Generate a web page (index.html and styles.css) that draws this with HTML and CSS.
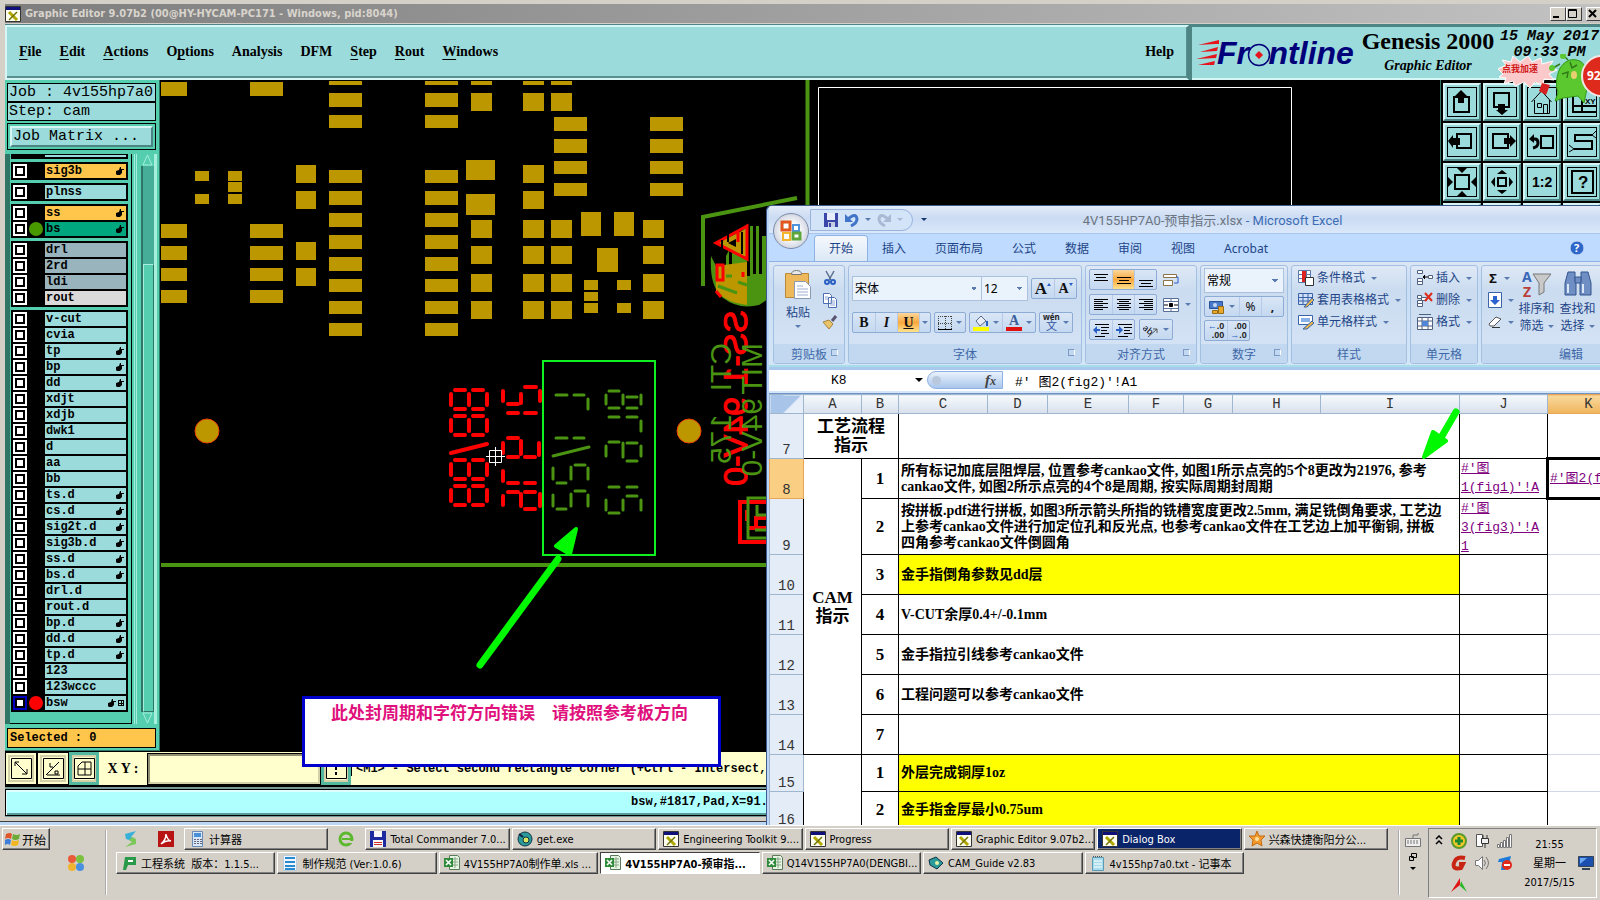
FILE: index.html
```html
<!DOCTYPE html>
<html lang="zh-CN">
<head>
    <meta charset="UTF-8">
    <meta name="viewport" content="width=device-width, initial-scale=1.0">
    <title>Graphic Editor 9.07b2</title>
    <link rel="stylesheet" href="styles.css">
</head>
<body>
    <!-- shared icons -->
    <svg class="sprite" width="0" height="0">
        <symbol id="hand" viewBox="0 0 8 8"><path d="M0 4l3-1 1-3 1 0v2h3v1H6v3L4 8H1L0 7z"/></symbol>
        <symbol id="xwin" viewBox="0 0 16 16"><path fill="#fffff0" stroke="#333" d="M.5.5h15v15H.5z"/><path fill="#10107a" d="M1 1h14v3H1z"/><path stroke="#b0a800" stroke-width="3" d="M4 6l8 8"/><path stroke="#6c7000" stroke-width="1.5" d="M12 6l-8 8"/></symbol>
        <symbol id="xls" viewBox="0 0 16 16"><path fill="#e8f4e4" stroke="#5a7a5a" d="M5.500.5h8l2 2v12h-10z"/><path stroke="#86a886" d="M7 4h7M7 7h7M7 10h7M11 2v11"/><path fill="#2e8b3a" d="M0 3h9v9H0z"/><path stroke="#fff" stroke-width="1.600" d="M2 5l5 5M7 5l-5 5"/></symbol>
    </svg>

    <div class="desktop">
        <!-- Genesis window -->
        <div class="genesis">
            <div class="g-title">
                <svg width="16" height="16"><use href="#xwin"/></svg>
                <span class="g-caption">Graphic Editor 9.07b2 (00@HY-HYCAM-PC171 - Windows, pid:8044)</span>
                <button class="win-btn" aria-label="Minimize"><svg width="12" height="11"><path d="M2 8h6v2H2z"/></svg></button>
                <button class="win-btn" aria-label="Maximize"><svg width="12" height="11"><path fill="none" stroke="#000" d="M1.500 1.500h8v8h-8zM1.500 2.500h8"/></svg></button>
                <button class="win-btn close" aria-label="Close"><svg width="12" height="11"><path stroke="#000" stroke-width="2" d="M2 2l7 7M9 2L2 9"/></svg></button>
            </div>

            <div class="g-top">
                <nav class="g-menu">
                    <button><u>F</u>ile</button>
                    <button><u>E</u>dit</button>
                    <button><u>A</u>ctions</button>
                    <button>O<u>p</u>tions</button>
                    <button>Analysis</button>
                    <button>DFM</button>
                    <button><u>S</u>tep</button>
                    <button><u>R</u>out</button>
                    <button><u>W</u>indows</button>
                    <button class="help">Help</button>
                </nav>
                <div class="g-brand">
                    <svg class="frontline" width="162" height="36">
                        <path fill="#e8141c" d="M2 7l21-5v4h-4zM4 14l18-5-1 4zM0 21l21-5-1 4zM2 27l17-4-1 4z"/>
                        <text x="21" y="26">Frontline</text>
                        <circle cx="63" cy="17" r="10.500" fill="#9bdbdb" stroke="#00007a" stroke-width="1.500"/>
                        <path fill="#e8141c" d="M63 13l4 4-4 4-4-4z"/>
                    </svg>
                    <div class="g-product">
                        <strong>Genesis 2000</strong>
                        <em>Graphic Editor</em>
                    </div>
                    <div class="g-date">15 May 2017<br>09:33 PM</div>
                </div>
            </div>

            <div class="g-main">
                <aside class="g-side">
                    <div class="job">
                        <div>Job : 4v155hp7a0</div>
                        <div>Step: cam</div>
                    </div>
                    <div class="matrix"><button>Job Matrix ...</button></div>
                    <div class="layers">
                        <div class="layer-list">
                            <div class="group cut"><span></span></div>
                            <div class="group">
                                <label class="layer orange"><input type="checkbox"><i></i><span>sig3b<svg><use href="#hand"/></svg></span></label>
                            </div>
                            <div class="group">
                                <label class="layer"><input type="checkbox"><i></i><span>plnss</span></label>
                            </div>
                            <div class="group">
                                <label class="layer orange"><input type="checkbox"><i></i><span>ss<svg><use href="#hand"/></svg></span></label>
                                <label class="layer green"><input type="checkbox"><i class="dot"></i><span>bs<svg><use href="#hand"/></svg></span></label>
                            </div>
                            <div class="group">
                                <label class="layer gray"><input type="checkbox"><i></i><span>drl</span></label>
                                <label class="layer gray"><input type="checkbox"><i></i><span>2rd</span></label>
                                <label class="layer gray"><input type="checkbox"><i></i><span>ldi</span></label>
                                <label class="layer light"><input type="checkbox"><i></i><span>rout</span></label>
                            </div>
                            <div class="group">
                                <label class="layer"><input type="checkbox"><i></i><span>v-cut</span></label>
                                <label class="layer"><input type="checkbox"><i></i><span>cvia</span></label>
                                <label class="layer"><input type="checkbox"><i></i><span>tp<svg><use href="#hand"/></svg></span></label>
                                <label class="layer"><input type="checkbox"><i></i><span>bp<svg><use href="#hand"/></svg></span></label>
                                <label class="layer"><input type="checkbox"><i></i><span>dd<svg><use href="#hand"/></svg></span></label>
                                <label class="layer"><input type="checkbox"><i></i><span>xdjt</span></label>
                                <label class="layer"><input type="checkbox"><i></i><span>xdjb</span></label>
                                <label class="layer"><input type="checkbox"><i></i><span>dwk1</span></label>
                                <label class="layer"><input type="checkbox"><i></i><span>d</span></label>
                                <label class="layer"><input type="checkbox"><i></i><span>aa</span></label>
                                <label class="layer"><input type="checkbox"><i></i><span>bb</span></label>
                                <label class="layer"><input type="checkbox"><i></i><span>ts.d<svg><use href="#hand"/></svg></span></label>
                                <label class="layer"><input type="checkbox"><i></i><span>cs.d<svg><use href="#hand"/></svg></span></label>
                                <label class="layer"><input type="checkbox"><i></i><span>sig2t.d<svg><use href="#hand"/></svg></span></label>
                                <label class="layer"><input type="checkbox"><i></i><span>sig3b.d<svg><use href="#hand"/></svg></span></label>
                                <label class="layer"><input type="checkbox"><i></i><span>ss.d<svg><use href="#hand"/></svg></span></label>
                                <label class="layer"><input type="checkbox"><i></i><span>bs.d<svg><use href="#hand"/></svg></span></label>
                                <label class="layer"><input type="checkbox"><i></i><span>drl.d</span></label>
                                <label class="layer"><input type="checkbox"><i></i><span>rout.d</span></label>
                                <label class="layer"><input type="checkbox"><i></i><span>bp.d<svg><use href="#hand"/></svg></span></label>
                                <label class="layer"><input type="checkbox"><i></i><span>dd.d<svg><use href="#hand"/></svg></span></label>
                                <label class="layer"><input type="checkbox"><i></i><span>tp.d<svg><use href="#hand"/></svg></span></label>
                                <label class="layer"><input type="checkbox"><i></i><span>123</span></label>
                                <label class="layer"><input type="checkbox"><i></i><span>123wccc</span></label>
                                <label class="layer work"><input type="checkbox" checked><i class="dot red"></i><span>bsw<svg><use href="#hand"/></svg><b></b></span></label>
                            </div>
                        </div>
                        <div class="scroll">
                            <svg width="11" height="12"><path fill="#54ceaf" stroke="#a5efdc" d="M5.500 1L1 11h9z"/></svg>
                            <div class="track"><div class="thumb"></div></div>
                            <svg width="11" height="12"><path fill="#54ceaf" stroke="#a5efdc" d="M5.500 11L1 1h9z"/></svg>
                        </div>
                    </div>
                    <div class="selected">Selected : 0</div>
                </aside>

                <svg class="board">
                    <defs>
                        <path id="wide" d="M0 81h33v4h-33zM0 93h33v14h-33zM0 115h33v13h-33zM0 170h33v13h-33zM0 191h33v14h-33zM0 213h33v14h-33zM0 235h33v14h-33zM0 257h33v14h-33zM0 279h33v13h-33zM0 301h33v13h-33zM0 323h33v13h-33z"/>
                        <path id="four" d="M0 220h21v18h-21zM0 246h21v18h-21zM0 274h21v18h-21zM0 301h21v18h-21z"/>
                        <path id="two" d="M0 81h21v4h-21zM0 93h21v18h-21z"/>
                        <path id="conn" d="M0 117h33v14h-33zM0 139h33v14h-33zM0 161h33v13h-33zM0 183h33v13h-33z"/>
                        <path id="eight" d="M1 6v11M19 6v11M37 6v11M5 2h10M23 2h10M5 21h10M23 21h10"/>
                    </defs>
                    <g transform="translate(-160 -80)">
                        <g fill="#bd9700">
                            <path d="M161 82h26v14h-26zM161 224h26v14h-26zM161 246h26v14h-26zM161 268h26v13h-26zM161 290h26v13h-26z"/>
                            <path d="M250 82h33v14h-33zM250 224h33v14h-33zM250 246h33v14h-33zM250 268h33v13h-33zM250 290h33v13h-33z"/>
                            <path d="M195 171h14v10h-14zM195 194h14v10h-14zM228 171h14v10h-14zM228 182h14v10h-14zM228 194h14v10h-14z"/>
                            <path d="M296 165h20v18h-20zM296 191h20v18h-20zM296 242h20v18h-20zM296 268h20v18h-20z"/>
                            <use href="#wide" x="329"/><use href="#wide" x="425"/>
                            <use href="#two" x="471"/><use href="#two" x="523"/><use href="#two" x="551"/>
                            <use href="#four" x="471"/><use href="#four" x="523"/><use href="#four" x="551"/><use href="#four" x="643"/>
                            <path d="M466 160h29v20h-29zM466 194h29v21h-29zM523 165h21v18h-21zM523 191h21v18h-21z"/>
                            <use href="#conn" x="554"/><use href="#conn" x="650"/>
                            <path d="M581 212h20v24h-20zM614 212h20v24h-20zM597 248h21v24h-21z"/>
                            <path d="M584 280h14v10h-14zM584 292h14v9h-14zM584 303h14v10h-14zM617 280h14v10h-14zM617 303h14v10h-14z"/>
                            <circle cx="207" cy="431" r="12" stroke="#e84000"/>
                            <circle cx="689" cy="431" r="12" stroke="#e84000"/>
                        </g>
                        <g fill="none" stroke="#4a9412" stroke-width="4">
                            <path d="M161 565h640M807.500 80v140M797 198l-94 19v69"/>
                        </g>
                        <path fill="none" stroke="#fff" d="M818.500 400V87.500h473V400"/>

                        <!-- maker mark -->
                        <path fill="#4a9412" d="M711 256q-2 30 12 42 16 12 36 7l12-8V236h-9v38h-3v-48h-3v48h-3v-48h-3v50h-3v-52l-15 22v32h-3v-28l-3 6v24h-3z"/>
                        <path fill="#bd9700" d="M716 266l31-4v43q-20-2-31-14z"/>
                        <path fill="#bd9700" d="M717 243l29-14v28z"/>
                        <path fill="#000" d="M728 243l8-4v8z"/>
                        <path fill="none" stroke="#f00" stroke-width="3" d="M747 226l-31 17 31 16zM738 231v11M717 265h6v15h-6zM743 272v5M716 291l5 6"/>
                        <path stroke="#000" stroke-width="2" d="M722 240v12M728 234v8M742 232v22"/>
                        <path stroke="#4a9412" stroke-width="3" d="M718 286l19 7M726 276h6M738 282l9 3"/>
                        <g class="silk red">
                            <text transform="matrix(0 1 1 0 747 310)">SS-1</text>
                            <text transform="matrix(0 1 1 0 747 397)">94V-0</text>
                        </g>
                        <g class="silk">
                            <text transform="matrix(0 1 1 0 731 343)">CTI</text>
                            <text transform="matrix(0 1 1 0 731 414)">175</text>
                            <text transform="matrix(0 1 1 0 762 343)">MIT</text>
                            <text transform="matrix(0 1 1 0 762 398)">94V-0</text>
                        </g>
                        <path fill="none" stroke="#f00" stroke-width="4" d="M775 502h-35v40h35M747 510v11M766 518h-10v12M747 528h20"/>
                        <path fill="none" stroke="#4a9412" stroke-width="3" d="M775 498h-27v40h27M757 505v10h10M755 530h12"/>

                        <!-- date code segments -->
                        <g class="seg red">
                            <use href="#eight" x="450" y="388"/><use href="#eight" x="450" y="414"/>
                            <path d="M451 453l36-9"/>
                            <use href="#eight" x="450" y="458"/><use href="#eight" x="450" y="484"/>
                            <path d="M503 391v10M521 394v9M540 391v10M525 387h11M508 404h10M508 413h10M525 413h11"/>
                            <path d="M508 438h10M503 443v10M521 441v13M539 443v12M508 457h10M525 457h10"/>
                            <path d="M503 471v10M508 483h10M525 483h10M508 492h10M525 492h10M503 496v9M521 494v12M540 494v12M525 509h10"/>
                        </g>
                        <g class="seg">
                            <path d="M556 395h11M574 395h10M588 399v10M556 438h11M574 438h10M553 456l36-9"/>
                            <path d="M553 468v11M557 483h9M571 467v12M575 465h10M588 468v11M553 495v11M557 509h9M571 494v12M575 491h10M588 495v11"/>
                            <path d="M609 391h10M606 395v9M623 395v9M641 395v9M627 397h10M609 408h10M627 408h10M609 417h10M627 417h10M641 421v10"/>
                            <path d="M609 442h10M606 446v10M623 443v14M641 446v10M627 443h10M627 461h10M609 487h10M627 487h10"/>
                            <path d="M627 496h10M606 500v10M623 500v10M641 500v10M609 513h10"/>
                        </g>
                        <path fill="none" stroke="#10f020" stroke-width="2" d="M543 361h112v194H543z"/>
                        <path fill="none" stroke="#fff" d="M489.500 450.500h12v12h-12zM486 456.500h19M495.500 447v19"/>
                    </g>
                </svg>

                <div class="g-tools">
                    <button aria-label="Up"><svg><path fill="none" stroke="#000" stroke-width="2" d="M9 12h15v15H9z"/><path d="M16 5l6 6h-3v7h-6v-7h-3z"/></svg></button>
                    <button aria-label="Down"><svg><path fill="none" stroke="#000" stroke-width="2" d="M9 8h15v14H9z"/><path d="M13 19h7v6h3l-6 5-6-5h2z"/></svg></button>
                    <button aria-label="Home"><svg><path fill="none" stroke="#000" d="M6.500 17l10-11 10 11M9.500 15v13.500h15V15M12.500 18.500h4v4h-4zM18.500 29V19.500h4V29"/></svg></button>
                    <button aria-label="XY zoom"><svg><path fill="none" stroke="#000" stroke-width="2" d="M8 4v23h23M8 21h23M17 4v23"/><text x="20" y="19" font-size="8">XY</text></svg></button>
                    <button aria-label="Left"><svg><path fill="none" stroke="#000" stroke-width="2" d="M12 9h14v14H12z"/><path d="M3 16l5-6v3h7v7H8v3z"/></svg></button>
                    <button aria-label="Right"><svg><path fill="none" stroke="#000" stroke-width="2" d="M8 9h15v14H8z"/><path d="M19 13h6v-3l6 6-6 6v-3h-6z"/></svg></button>
                    <button aria-label="Previous view"><svg><path fill="none" stroke="#000" stroke-width="2" d="M16 11h12v12H16z"/><path fill="none" stroke="#000" stroke-width="3" d="M6 14h4q3 0 3 4t-5 5"/><path d="M4 14l5-5v9z"/></svg></button>
                    <button aria-label="Snake"><svg><path fill="none" stroke="#000" stroke-width="2" d="M27 10H10v6h17v8H9"/><path stroke="#000" d="M27 10l4-4M27 10l4 3M9 24l-5-4M9 24l-5 3"/></svg></button>
                    <button aria-label="Zoom in"><svg><path fill="none" stroke="#000" stroke-width="2" d="M10 10h14v14H10z"/><path d="M12 3h10l-5 5zM17 26l5 5H12zM3 12l5 5-5 5zM31 12l-5 5 5 5z"/></svg></button>
                    <button aria-label="Zoom out"><svg><path fill="none" stroke="#000" stroke-width="2" d="M13 13h8v8h-8z"/><path d="M17 5l5 4H12zM12 25h10l-5 4zM10 12v10l-4-5zM24 12v10l4-5z"/></svg></button>
                    <button aria-label="Scale"><svg><text x="7" y="22" font-size="14" font-weight="bold">1:2</text></svg></button>
                    <button aria-label="Help"><svg><path fill="none" stroke="#000" stroke-width="2" d="M7 6h21v22H7z"/><text x="13" y="23" font-size="17" font-weight="bold">?</text></svg></button>
                    <button aria-label="Tool"></button><button aria-label="Tool"></button><button aria-label="Tool"></button><button aria-label="Tool"></button>
                </div>
            </div>

            <div class="g-cmd">
                <button aria-label="Diagonal"><svg width="21" height="21"><path fill="none" stroke="#000" d="M.5.5h20v20H.5zM4 4l12 12M4 8V4h4M16 11v5h-5"/></svg></button>
                <button aria-label="Angle"><svg width="21" height="21"><path fill="none" stroke="#000" d="M.5.5h20v20H.5zM3 17L16 4M4 17h13M7 5v4h3M12 13h3v3h-3z"/></svg></button>
                <button class="on" aria-label="Grid"><svg width="21" height="21"><path fill="none" stroke="#000" d="M.5.5h20v20H.5zM4 17V8l4-4h9v13zM11 4v13M4 11h13"/></svg></button>
                <label for="xy">X Y :</label>
                <input id="xy" type="text">
                <button class="on" aria-label="Message"><svg width="21" height="21"><path fill="none" stroke="#000" d="M.5.5h20v20H.5z"/><path stroke="#000" stroke-width="2" d="M10 3v9M10 14v3"/></svg></button>
                <span class="msg">&lt;M1&gt; - Select second rectangle corner (+Ctrl - Intersect, +</span>
            </div>
            <div class="g-status"><span>bsw,#1817,Pad,X=91.</span></div>
        </div>

        <!-- Excel window -->
        <div class="excel">
            <div class="x-title">
                <div class="qat">
                    <svg width="16" height="16"><path fill="#3a46a8" d="M1 1h14v14H1z"/><path fill="#e8ecff" d="M4 1h8v7H4z"/><path fill="#c8cce0" d="M5 10h7v5H5z"/><path fill="#3a46a8" d="M6 11h2v4H6z"/></svg>
                    <svg width="16" height="16"><path fill="none" stroke="#3f74c8" stroke-width="3" d="M4 7q8-7 9 0 0 4-6 7"/><path fill="#3f74c8" d="M1 2v8h8z"/></svg>
                    <i class="caret"></i>
                    <svg width="16" height="16"><path fill="none" stroke="#a9b9d4" stroke-width="3" d="M12 7Q4 0 3 7q0 4 6 7"/><path fill="#a9b9d4" d="M15 2v8H7z"/></svg>
                    <i class="caret faint"></i>
                </div>
                <i class="caret bar"></i>
                <span class="x-caption">4V155HP7A0-预审指示.xlsx <b>- Microsoft Excel</b></span>
            </div>
            <button class="orb" aria-label="Office">
                <svg width="24" height="24"><g fill="none" stroke-width="3"><path stroke="#e0561c" d="M3 3h8v8H3z"/><path stroke="#4f93dc" stroke-width="2" d="M14 6h6v6h-6z"/><path stroke="#f2b52c" stroke-width="2" d="M4 14h7v7H4z"/><path stroke="#5da63c" d="M14 14h7v6h-7z"/></g></svg>
            </button>
            <nav class="x-tabs">
                <button class="active">开始</button><button>插入</button><button>页面布局</button><button>公式</button><button>数据</button><button>审阅</button><button>视图</button><button>Acrobat</button>
                <svg class="q" width="16" height="16"><circle cx="8" cy="8" r="7" fill="#2e66c9" stroke="#c8dcf5"/><text x="5" y="12" font-size="11" font-weight="bold" fill="#fff">?</text></svg>
            </nav>

            <div class="ribbon">
                <section class="rg clip">
                    <div class="rg-body">
                        <button class="big">
                            <svg width="28" height="31"><path fill="#edb95a" stroke="#b98a3a" d="M1.500 4.500h23v24h-23z"/><path fill="#e8e8e8" stroke="#777" d="M7.500 5.500q0-4 5-4t5 4z"/><path fill="#fff" stroke="#8a9ab5" d="M10.500 12.500h11l5 5v12h-16z"/><path stroke="#9db0d0" d="M13 17h6M13 20h11M13 23h11M13 26h11"/></svg>
                            粘贴<i class="caret"></i>
                        </button>
                        <div class="smalls">
                            <svg width="16" height="16"><path stroke="#5b6f8f" stroke-width="1.500" d="M4 1l5 9M12 1L7 10"/><g fill="none" stroke="#2a5fc4" stroke-width="2"><circle cx="5" cy="12" r="2"/><circle cx="11" cy="12" r="2"/></g></svg>
                            <svg width="16" height="16"><path fill="#fff" stroke="#4a6fb0" d="M1.500 1.500h6l2 2v8h-8zM6.500 5.500h6l2 2v8h-8z"/><path stroke="#8aa5d5" d="M8 9h5M8 11h5M8 13h5M3 5h3M3 7h3"/></svg>
                            <svg width="16" height="16"><path stroke="#5a5470" stroke-width="3" d="M14 2l-4 5"/><path fill="#e8c36a" stroke="#a5843a" d="M1 8l6-2 4 4-4 5z"/></svg>
                        </div>
                    </div>
                    <h3>剪贴板<i class="more"></i></h3>
                </section>

                <section class="rg font">
                    <div class="rg-body col">
                        <div class="row">
                            <select aria-label="字体" class="sel-font"><option>宋体</option></select><select aria-label="字号" class="sel-size"><option>12</option></select>
                            <div class="bg"><button class="ser lg" aria-label="增大字号">A<i class="tri"></i></button><button class="ser" aria-label="减小字号">A<i class="tri down"></i></button></div>
                        </div>
                        <div class="row">
                            <div class="bg"><button class="ser">B</button><button class="ser it">I</button><button class="ser un hot">U</button><button class="thin" aria-label="下划线"><i class="caret"></i></button></div>
                            <div class="bg"><button aria-label="边框"><svg width="14" height="14"><path fill="none" stroke="#444" stroke-dasharray="1 1" d="M.5 0v14M7.500 0v14M13.500 0v14M0 .5h14M0 7.500h14"/><path stroke="#000" d="M0 13.500h14"/></svg><i class="caret"></i></button></div>
                            <div class="bg"><button aria-label="填充"><svg width="16" height="16"><path fill="#e8eef8" stroke="#5a6a8a" d="M3 6l5-5 5 5-6 5z"/><path stroke="#2a62c4" stroke-width="2" d="M14 6v5"/><path fill="#ff0" d="M0 12h16v4H0z"/></svg><i class="caret"></i></button><button class="ser fc"><span>A</span><i class="caret"></i></button></div>
                            <div class="bg"><button aria-label="拼音"><span class="wen"><small>wén</small>文</span><i class="caret"></i></button></div>
                        </div>
                    </div>
                    <h3>字体<i class="more"></i></h3>
                </section>

                <section class="rg align">
                    <div class="rg-body col">
                        <div class="row">
                            <div class="bg"><button aria-label="顶端"><svg width="14" height="14"><path stroke="#000" d="M0 1.500h14M2 4.500h10M0 7.500h14"/></svg></button><button class="hot" aria-label="居中"><svg width="14" height="14"><path stroke="#000" d="M0 4.500h14M2 7.500h10M0 10.500h14"/></svg></button><button aria-label="底端"><svg width="14" height="14"><path stroke="#000" d="M0 7.500h14M2 10.500h10M0 13.500h14"/></svg></button></div>
                            <svg width="16" height="16"><path fill="#fff" stroke="#8a7448" d="M.5 2.500h13v3H.5zM.5 8.500h9v5h-9z"/><path fill="none" stroke="#2a5fc4" d="M13 5h2v6h-4"/></svg>
                        </div>
                        <div class="row">
                            <div class="bg"><button aria-label="左"><svg width="14" height="14"><path stroke="#000" d="M0 1.500h14M0 3.500h9M0 5.500h14M0 7.500h9M0 9.500h14M0 11.500h9"/></svg></button><button aria-label="中"><svg width="14" height="14"><path stroke="#000" d="M0 1.500h14M2 3.500h10M0 5.500h14M2 7.500h10M0 9.500h14M2 11.500h10"/></svg></button><button aria-label="右"><svg width="14" height="14"><path stroke="#000" d="M0 1.500h14M5 3.500h9M0 5.500h14M5 7.500h9M0 9.500h14M5 11.500h9"/></svg></button></div>
                            <svg width="16" height="16"><path fill="#fff" stroke="#56709a" d="M.5 1.500h15v13H.5zM0 4.500h16M0 11.500h16M8 1v3M8 12v3"/><path stroke="#000" d="M1 8h4M11 8h4M6.500 6.500h3v3h-3z"/></svg><i class="caret"></i>
                        </div>
                        <div class="row">
                            <div class="bg"><button aria-label="减少缩进"><svg width="16" height="14"><path stroke="#000" d="M2 1.500h14M8 4.500h8M8 7.500h6M8 10.500h8M2 13.500h10"/><path fill="#2a5fc4" d="M0 7l4-4v3h3v2H4v3z"/></svg></button><button aria-label="增加缩进"><svg width="16" height="14"><path stroke="#000" d="M2 1.500h14M8 4.500h8M8 7.500h6M8 10.500h8M2 13.500h10"/><path fill="#2a5fc4" d="M7 7L3 3v3H0v2h3v3z"/></svg></button></div>
                            <div class="bg"><button aria-label="方向"><svg width="16" height="14"><text x="0" y="9" font-size="9" transform="rotate(40 4 6)">ab</text><path stroke="#555" d="M5 14l9-8M14 6h-4M14 6v4"/></svg><i class="caret"></i></button></div>
                        </div>
                    </div>
                    <h3>对齐方式<i class="more"></i></h3>
                </section>

                <section class="rg num">
                    <div class="rg-body col">
                        <div class="row"><select aria-label="数字格式"><option>常规</option></select></div>
                        <div class="row"><div class="bg fill"><button aria-label="货币"><svg width="16" height="16"><path fill="#4a78c8" stroke="#27509a" d="M.5 2.500h13v7H.5z"/><circle cx="6" cy="6" r="2" fill="#c5d8f5"/><path fill="#eaa92c" stroke="#9a6c10" d="M9.500 7.500h5v7h-5zM3.500 11.500h5v3h-5z"/></svg><i class="caret"></i></button><button>%</button><button><b>,</b></button></div></div>
                        <div class="row"><div class="bg"><button class="dec"><span><i>←</i>.0<br>.00</span></button><button class="dec"><span>.00<br><i>→</i>.0</span></button></div></div>
                    </div>
                    <h3>数字<i class="more"></i></h3>
                </section>

                <section class="rg styles">
                    <div class="rg-body list">
                        <button><svg width="16" height="16"><path fill="#fff" stroke="#5a78a8" d="M.5.5h12v12H.5zM4.500 0v13M8.500 0v13M0 4.500h13M0 8.500h13"/><path fill="#d22" d="M4 1h4v11H4z"/><path fill="#fff" stroke="#333" d="M7.500 7.500h8v8h-8z"/></svg>条件格式<i class="caret"></i></button>
                        <button><svg width="16" height="16"><path fill="#cfe0f8" stroke="#3a62a8" d="M.5 1.500h14v11H.5zM5 1v12M10 1v12M0 5.500h15M0 9h15"/><path fill="#e8b84a" stroke="#3a62a8" d="M6 15l8-9 2 2-7 7z"/></svg>套用表格格式<i class="caret"></i></button>
                        <button><svg width="16" height="16"><path fill="#fff" stroke="#3a62a8" d="M.5 1.500h14v9H.5z"/><path fill="#8ab0ea" d="M3 4h9v4H3z"/><path fill="#e8b84a" stroke="#3a62a8" d="M5 15l9-8 2 2-7 6z"/></svg>单元格样式<i class="caret"></i></button>
                    </div>
                    <h3>样式</h3>
                </section>

                <section class="rg cells">
                    <div class="rg-body list">
                        <button><svg width="16" height="16"><path fill="#fff" stroke="#50617f" d="M.5.5h5v3h-5zM.5 8.500h5v3h-5zM.5 11.500h5v3h-5zM11.500 5.500h4v3h-4z"/><path stroke="#000" d="M6 7h5M8 5L6 7l2 2"/></svg>插入<i class="caret"></i></button>
                        <button><svg width="16" height="16"><path fill="#fff" stroke="#50617f" d="M.5 3.500h4v3h-4zM.5 8.500h5v3h-5zM.5 11.500h5v3h-5zM4.500 5.500h5v3h-5z"/><path stroke="#e02a1a" stroke-width="2" d="M8 1l7 8M15 1L8 9"/></svg>删除<i class="caret"></i></button>
                        <button><svg width="16" height="16"><path fill="#fff" stroke="#50617f" d="M.5 3.500h15v12H.5zM5 3v13M11 3v13M0 7h16M0 12h16M2 .5h12"/><path fill="#4f86d8" d="M5 7h6v5H5z"/></svg>格式<i class="caret"></i></button>
                    </div>
                    <h3>单元格</h3>
                </section>

                <section class="rg edit">
                    <div class="rg-body">
                        <div class="rg-body list">
                            <button><b class="sum">Σ</b><i class="caret"></i></button>
                            <button aria-label="填充"><svg width="14" height="16"><path fill="#fff" stroke="#3a62a8" d="M.5.5h13v15H.5z"/><path fill="#2a62d0" d="M5 4h4v4h3l-5 5-5-5h3z"/></svg><i class="caret"></i></button>
                            <button aria-label="清除"><svg width="14" height="14"><path fill="#fff" stroke="#555" d="M1 9l7-7 5 2-7 7H2z"/><path stroke="#333" d="M4 12.500h8"/></svg><i class="caret"></i></button>
                        </div>
                        <button class="big">
                            <svg width="30" height="30"><text x="0" y="13" font-size="14" font-weight="bold" fill="#3a66b8">A</text><text x="1" y="28" font-size="14" font-weight="bold" fill="#b8403a">Z</text><path fill="#c9c9c9" stroke="#777" d="M11 5h18l-7 9v9l-5 3V14z"/></svg>
                            <span>排序和<br>筛选<i class="caret"></i></span>
                        </button>
                        <button class="big">
                            <svg width="30" height="30"><g fill="#6f8fc4" stroke="#34558e"><path d="M5 3h7v9h1v14H2V14zM18 3h7l3 11v12H17V12h1z"/><path d="M12 8h6v6h-6z"/></g><path stroke="#dbe6f7" stroke-width="2" d="M5 15v9M20 15v9"/></svg>
                            <span>查找和<br>选择<i class="caret"></i></span>
                        </button>
                    </div>
                    <h3>编辑</h3>
                </section>
            </div>

            <div class="formula">
                <div class="namebox">K8<i class="caret"></i></div>
                <div class="fx"><i></i><span>f<small>x</small></span></div>
                <input type="text" aria-label="编辑栏" value="#' 图2(fig2)'!A1">
            </div>

            <table class="sheet">
                <colgroup><col class="c0"><col class="ca"><col class="cb"><col class="cc"><col class="cd"><col class="ce"><col class="cf"><col class="cg"><col class="ch"><col class="ci"><col class="cj"><col class="ck"></colgroup>
                <thead>
                    <tr><th class="corner"></th><th>A</th><th>B</th><th>C</th><th>D</th><th>E</th><th>F</th><th>G</th><th>H</th><th>I</th><th>J</th><th class="cur">K</th></tr>
                </thead>
                <tbody>
                    <tr class="r44"><th>7</th><td class="name" colspan="2">工艺流程<br>指示</td><td class="t" colspan="7"></td><td class="lk"></td><td class="k"></td></tr>
                    <tr><th class="cur">8</th><td class="name" rowspan="7">CAM<br>指示</td><td class="n">1</td><td class="t" colspan="7">所有标记加底层阻焊层, 位置参考cankao文件, 如图1所示点亮的5个8更改为21976, 参考<br>cankao文件, 如图2所示点亮的4个8是周期, 按实际周期封周期</td><td class="lk"><a href="#fig1">#'图<br>1(fig1)'!A</a></td><td class="k active"><a href="#fig2">#'图2(fig2)'!A1</a></td></tr>
                    <tr class="r56"><th>9</th><td class="n">2</td><td class="t" colspan="7">按拼板.pdf进行拼板, 如图3所示箭头所指的铣槽宽度更改2.5mm, 满足铣倒角要求, 工艺边<br>上参考cankao文件进行加定位孔和反光点, 也参考cankao文件在工艺边上加平衡铜, 拼板<br>四角参考cankao文件倒圆角</td><td class="lk"><a href="#fig3">#'图<br>3(fig3)'!A<br>1</a></td><td class="k"></td></tr>
                    <tr><th>10</th><td class="n">3</td><td class="t y" colspan="7">金手指倒角参数见dd层</td><td class="lk"></td><td class="k"></td></tr>
                    <tr><th>11</th><td class="n">4</td><td class="t" colspan="7">V-CUT余厚0.4+/-0.1mm</td><td class="lk"></td><td class="k"></td></tr>
                    <tr><th>12</th><td class="n">5</td><td class="t" colspan="7">金手指拉引线参考cankao文件</td><td class="lk"></td><td class="k"></td></tr>
                    <tr><th>13</th><td class="n">6</td><td class="t" colspan="7">工程问题可以参考cankao文件</td><td class="lk"></td><td class="k"></td></tr>
                    <tr><th>14</th><td class="n">7</td><td class="t" colspan="7"></td><td class="lk"></td><td class="k"></td></tr>
                    <tr class="r37"><th>15</th><td class="name" rowspan="2"></td><td class="n">1</td><td class="t y" colspan="7">外层完成铜厚1oz</td><td class="lk"></td><td class="k"></td></tr>
                    <tr class="r37"><th>16</th><td class="n">2</td><td class="t y" colspan="7">金手指金厚最小0.75um</td><td class="lk"></td><td class="k"></td></tr>
                </tbody>
            </table>
        </div>

        <!-- notes drawn over both windows -->
        <div class="note">此处封周期和字符方向错误　请按照参考板方向</div>
        <svg class="marks">
            <g fill="#00f800" stroke="#00f800" stroke-linejoin="round">
                <path stroke-width="7" stroke-linecap="round" d="M480 665l78-106M1456 412l-14 24"/>
                <path stroke-width="4" d="M576 529l-20 17 14 8zM1424 457l9-25 13 9z"/>
            </g>
        </svg>
        <div class="booster">
            <svg width="110" height="56">
                <path fill="#fbc9c9" stroke="#fff" d="M2 15l8-4-4-5 9 2 2-6 7 6 8-6 4 6 9-4 1 6 11-3-4 6 8 3-8 4 5 6-10-1-1 6-8-3-5 6-6-6-9 4-2-5-9 3 2-6-7-1 4-3z"/>
                <path fill="#5cc830" stroke="#2f9a18" d="M64 14q8-12 20-7 8 5 9 18l-5 24-6-7-15 2-8 3 3-8q-4-12 2-25z"/>
                <g fill="none" stroke="#2f7a18" stroke-width="1.500"><path d="M66 20l6-2-1 6M74 8l2 6 5-3M64 10l-7 4M72 6l-4-4"/></g>
                <circle cx="56" cy="14" r="3" fill="#5cc830"/><circle cx="67" cy="2" r="3" fill="#5cc830"/>
                <ellipse cx="78" cy="21" rx="3" ry="4" fill="#e8d070"/>
                <path fill="#d82020" d="M46 29l8 2-4 10-7-4z"/>
                <circle cx="106" cy="22" r="20" fill="#de2a1c" stroke="#f0e6e6" stroke-width="2"/>
            </svg>
            <span class="tip">点我加速</span>
            <b>92</b>
        </div>
    </div>

    <footer class="taskbar">
        <div class="start-col">
            <button class="task start"><svg width="16" height="16"><path fill="#e2562a" d="M1 3q4-2 6 0l-1 5q-3-2-6 0z"/><path fill="#6cab35" d="M8 3q4 2 7 0l-1 5q-4 2-7 0z"/><path fill="#3c7ed8" d="M0 9q3-2 6 0l-1 5q-2-2-5 0z"/><path fill="#f2b720" d="M7 9q3 2 7 0l-1 5q-4 2-7 0z"/></svg>开始</button>
            <svg class="clover" width="18" height="18"><circle cx="5" cy="5" r="4" fill="#e85a3a"/><circle cx="13" cy="5" r="4" fill="#7cc040"/><circle cx="5" cy="13" r="4" fill="#f2b430"/><circle cx="13" cy="13" r="4" fill="#4a90e0"/></svg>
        </div>
        <div class="task-rows">
            <div class="task-row first">
                <svg width="16" height="16"><path fill="#38b0d8" d="M13 0L2 3l1 5 6 2 2-3-3-1z"/><path fill="#7cc858" d="M2 16l11-3V8L9 6 6 9l3 2z"/></svg>
                <svg width="16" height="16"><path fill="#b81414" d="M0 0h16v16H0z"/><path fill="none" stroke="#fff" stroke-width="1.500" d="M3 13q5-4 5-10 1 6 5 7-5-1-10 3"/></svg>
                <button class="task"><svg width="16" height="16"><path fill="#d8e8f8" stroke="#6a8ab5" d="M3.500.5h10v15h-10z"/><path fill="#4a90d8" d="M5 2h7v4H5z"/><path stroke="#667" stroke-dasharray="2 1" d="M5 8.500h8M5 10.500h8M5 12.500h8"/></svg>计算器</button>
                <svg width="18" height="18"><circle cx="9" cy="9" r="6" fill="none" stroke="#5cb82c" stroke-width="3"/><path stroke="#5cb82c" stroke-width="2" d="M5 9h9"/><path stroke="#d4d0c8" stroke-width="2" d="M12 12h5"/></svg>
                <button class="task"><svg width="16" height="16"><path fill="#1c2ca0" d="M0 0h16v16H0z"/><path fill="#f8f8f8" d="M4 0h8v6H4zM3 9h10v7H3z"/><path stroke="#d03030" d="M4 11.500h8M4 13.500h8"/></svg>Total Commander 7.0...</button>
                <button class="task"><svg width="16" height="16"><circle cx="8" cy="8" r="7" fill="#2a9a9a" stroke="#134"/><circle cx="9" cy="9" r="3" fill="#d8e860" stroke="#134"/><path stroke="#124" stroke-width="2" d="M2 3l4 3"/></svg>get.exe</button>
                <button class="task"><svg width="16" height="16"><use href="#xwin"/></svg>Engineering Toolkit 9....</button>
                <button class="task"><svg width="16" height="16"><use href="#xwin"/></svg>Progress</button>
                <button class="task"><svg width="16" height="16"><use href="#xwin"/></svg>Graphic Editor 9.07b2...</button>
                <button class="task navy"><svg width="16" height="16"><use href="#xwin"/></svg>Dialog Box</button>
                <button class="task"><svg width="16" height="16"><path fill="#f39a2c" stroke="#c46a10" d="M8 0l2 5 6 0-4 4 1 6-5-3-5 3 1-6-4-4h6z"/><circle cx="8" cy="8" r="2" fill="#ffe0a0"/></svg>兴森快捷衡阳分公...</button>
            </div>
            <div class="task-row">
                <button class="task"><svg width="16" height="16"><path fill="#2a9a4a" d="M4 2h11v8H7l-2 5H2z"/><path fill="#fff" d="M7 5h5v2H7z"/></svg>工程系统&nbsp; 版本：1.1.5...</button>
                <button class="task"><svg width="16" height="16"><path fill="#f0f6fc" stroke="#bcd" d="M1.500.5h13v15h-13z"/><path stroke="#2a8ad0" stroke-width="2" d="M3 3h10M3 7h10M3 11h10M3 14h10"/></svg>制作规范 (Ver:1.0.6)</button>
                <button class="task"><svg width="16" height="16"><use href="#xls"/></svg>4V155HP7A0制作单.xls ...</button>
                <button class="task pressed"><svg width="16" height="16"><use href="#xls"/></svg>4V155HP7A0-预审指...</button>
                <button class="task"><svg width="16" height="16"><use href="#xls"/></svg>Q14V155HP7A0(DENGBI...</button>
                <button class="task"><svg width="16" height="16"><path fill="#2a9a9a" stroke="#134" d="M1 5l7-3 7 6-6 6-7-4z"/><circle cx="9" cy="8" r="2" fill="#e8f0a0"/></svg>CAM_Guide v2.83</button>
                <button class="task"><svg width="16" height="16"><path fill="#a8dcec" stroke="#5a9ab5" d="M2.500 2.500h11v13h-11z"/><path stroke="#fff" d="M4 6h8M4 9h8M4 12h8"/><path stroke="#555" stroke-dasharray="1 1" d="M3 1.500h10"/></svg>4v155hp7a0.txt - 记事本</button>
            </div>
        </div>
        <div class="lang">
            <svg width="16" height="14"><path fill="#eee" stroke="#777" d="M.5 5.500h15v8H.5z"/><path stroke="#777" stroke-dasharray="2 1" d="M2 8h12M2 10h12"/><path fill="none" stroke="#777" d="M8 5V2h5V0"/></svg>
            <svg width="8" height="8"><path fill="none" stroke="#000" d="M2.500.5h5v4h-5zM.5 3.500h4v4h-4z"/></svg>
            <i class="caret black"></i>
        </div>
        <div class="tray">
            <svg class="chev" width="8" height="10"><path fill="none" stroke="#000" stroke-width="1.500" d="M1 4l3-3 3 3M1 9l3-3 3 3"/></svg>
            <div class="tray-icons">
                <svg width="16" height="16"><circle cx="8" cy="8" r="7" fill="#f2c82c" stroke="#5a9a2a" stroke-width="2"/><path stroke="#1c8a2a" stroke-width="3" d="M8 4v8M4 8h8"/></svg>
                <svg width="16" height="16"><path fill="#fff" stroke="#555" d="M2.500 1.500h6v12h-6z"/><path fill="#eee" stroke="#333" d="M7.500 5.500h7v5h-7zM9 2v3M13 2v3M11 11v4"/></svg>
                <svg width="16" height="16"><path fill="#fff" stroke="#777" d="M.5 11.500h2v3h-2zM3.500 9.500h2v5h-2zM6.500 7.500h2v7h-2zM9.500 4.500h2v10h-2zM12.500 1.500h2v13h-2z"/></svg>
                <svg width="16" height="16"><path fill="none" stroke="#c82414" stroke-width="4" d="M14 3Q5 1 3 8t7 5l2-4H8"/></svg>
                <svg width="16" height="16"><path fill="#fff" stroke="#777" d="M1.500 5.500h3l4-4v13l-4-4h-3z"/><path fill="none" stroke="#777" d="M10 5q3 3 0 6M12 2q5 6 0 12"/></svg>
                <svg width="16" height="16"><path fill="#1c7ad8" d="M2 4l12-3-1 4-5 10H4l1-8H1z"/><circle cx="10" cy="10" r="5" fill="#e02a1c"/><path fill="#fff" d="M7 9h6v2H7z"/></svg>
                <svg width="16" height="16"><path fill="#e01414" d="M0 15L9 1v7z"/><path fill="#28b828" d="M10 4l6 11-7-6z"/></svg>
            </div>
            <div class="clock"><span>21:55</span><span>星期一</span><span>2017/5/15</span></div>
            <svg width="16" height="14"><path fill="#1c50b0" stroke="#345" d="M.5.5h15v10H.5z"/><path fill="#6aa8f0" d="M2 2h7L2 8z"/><path stroke="#345" stroke-width="2" d="M4 13h8"/></svg>
        </div>
    </footer>
</body>
</html>
```
FILE: styles.css
```css
* { box-sizing: border-box; }
body { margin: 0; height: 100vh; display: flex; flex-direction: column; overflow: hidden; background: #bcd6f6; font-family: "Noto Sans", "Noto Sans CJK SC", sans-serif; font-size: 12px; color: #000; }
button { font: inherit; color: inherit; background: none; border: none; padding: 0; margin: 0; }
svg { display: block; flex: none; }
i { font-style: normal; }
.sprite { position: absolute; }
.desktop { flex: 1; position: relative; overflow: hidden; min-height: 0; }
.caret { display: inline-block; flex: none; width: 0; height: 0; border: 3px solid transparent; border-top-color: #5a7bb0; border-bottom-width: 0; vertical-align: middle; }
.caret.faint { border-top-color: #a9b9d4; }
.caret.black { border-top-color: #000; }

/* ---- genesis ---- */
.genesis { position: absolute; top: 0; left: 0; right: -8px; bottom: 3px; padding: 4px 4px 4px 5px; background: #d4d0c8; display: flex; flex-direction: column; font-family: "Liberation Mono", monospace; font-weight: bold; border-bottom: 1px solid #404040; }
.g-title { height: 20px; display: flex; align-items: center; gap: 4px; background: linear-gradient(90deg, #7e7e7e, #c2c2c2); border-bottom: 1px solid #d4d0c8; }
.g-caption { flex: 1; font: bold 11px "DejaVu Sans Condensed", "Open Sans", sans-serif; color: #d8d4cc; }
.win-btn { width: 16px; height: 14px; background: #d4d0c8; border: 1px solid; border-color: #fff #404040 #404040 #fff; margin-left: -4px; }
.win-btn.close { margin: 0 2px 0 0; }
.g-top { height: 56px; display: flex; background: #4d8585; }
.g-menu { flex: 1; margin: 1px 1px 0 0; padding: 0 13px 2px 12px; display: flex; align-items: center; gap: 18px; background: #9bdbdb; border: 2px solid; border-color: #d6f6f6 #4d8585 #d6f6f6 #d6f6f6; box-shadow: inset -1px -2px 0 #5a8f8f; font: bold 14px "Liberation Serif", serif; }
.g-menu u { text-underline-offset: 3px; }
.g-menu .help { margin-left: auto; }
.g-brand { width: 412px; margin: 3px 0 0 2px; display: flex; background: #9bdbdb; border-bottom: 2px solid #d6f6f6; }
.frontline { margin: 11px 2px 0 4px; }
.frontline text { font: italic bold 32px "Liberation Sans", sans-serif; fill: #00007a; }
.g-product { width: 136px; display: flex; flex-direction: column; align-items: center; font-family: "Liberation Serif", serif; }
.g-product strong { font-size: 24px; line-height: 28px; }
.g-product em { font-size: 14px; line-height: 22px; }
.g-date { margin: 2px 0 0 4px; font: italic bold 15px/16px "Liberation Mono", monospace; text-align: center; white-space: nowrap; }
.g-main { flex: 1; min-height: 0; display: flex; background: #000; }
.g-side { width: 155px; padding: 3px 3px 2px 2px; display: flex; flex-direction: column; background: #54ceaf; border-right: 1px solid #2f7565; border-bottom: 1px solid #2f7565; }
.job div { height: 19px; padding-left: 1px; background: #9bdbdb; border: 1px solid #000; font-size: 15px; line-height: 17px; font-weight: normal; white-space: nowrap; }
.matrix { margin: 2px 0 4px; padding: 2px; height: 27px; border: 1px solid #000; background: #54ceaf; }
.matrix button { width: 100%; height: 21px; padding-left: 1px; text-align: left; font-size: 15px; line-height: 17px; font-weight: normal; background: #9bdbdb; border: 2px solid; border-color: #d6f6f6 #4d8585 #4d8585 #d6f6f6; }
.layers { flex: 1; min-height: 0; margin: 0 -1px 4px -2px; display: flex; border-left: 5px solid #2f7565; }
.layer-list { width: 122px; padding: 0 1px; display: flex; flex-direction: column; gap: 3px; border-right: 1px solid #000; border-bottom: 1px solid #000; }
.group { padding: 1px; background: #000; width: 117px; }
.group.cut { height: 5px; }
.group.cut span { display: block; height: 2px; margin: 0 1px 0 33px; background: #9bdbdb; }
.layer { height: 16px; padding: 1px; display: flex; align-items: center; }
.layer input { appearance: none; margin: 0; width: 14px; height: 14px; background: #fff; border: 2px solid #fff; box-shadow: inset 0 0 0 2px #000; }
.layer.work input { border-color: #0000c0; }
.layer > i { width: 14px; height: 14px; margin: 0 2px; }
.layer .dot { border-radius: 50%; background: #489800; }
.layer .dot.red { background: #f00; }
.layer span { flex: 1; height: 14px; padding: 0 2px 0 1px; display: flex; align-items: center; background: #9bdbdb; line-height: 14px; font-size: 12px; }
.layer span svg { width: 8px; height: 8px; margin-left: auto; }
.layer span b { width: 6px; height: 6px; margin-left: 2px; border: 1px solid #000; background: linear-gradient(#000, #000) 50%/1px 100% no-repeat, linear-gradient(#000, #000) 50%/100% 1px no-repeat; }
.layer.orange span, .selected { background: #ffc64b; }
.layer.green span { background: #00a67d; }
.layer.gray span { background: #9ab4be; }
.layer.light span { background: #dadada; }
.scroll { flex: 1; margin-left: 2px; padding-left: 3px; border-left: 3px double #a5efdc; display: flex; flex-direction: column; align-items: center; border-right: 3px solid #a5efdc; box-shadow: inset 1px 0 0 #54ceaf; }
.track { flex: 1; width: 13px; padding-top: 98px; display: flex; background: #45ad98; border-left: 2px solid #2f7565; }
.thumb { flex: 1; background: #54ceaf; border: 1px solid; border-color: #a5efdc #2f7565 #2f7565 #a5efdc; }
.selected { height: 20px; padding-left: 2px; border: 1px solid #000; line-height: 19px; }
.board { flex: 1; height: 100%; min-width: 0; background: #000; }
.silk { fill: #4a9412; font: 30px "Liberation Sans", sans-serif; }
.silk.red { fill: #f00; stroke: #f00; font-size: 34px; }
.seg { fill: none; stroke: #4a9412; stroke-width: 3; stroke-linecap: round; }
.seg.red { stroke: #f00; stroke-width: 4; }
.g-tools { width: 164px; padding: 3px 0 0 2px; display: grid; grid-template-columns: repeat(4, 38px); grid-auto-rows: 38px; gap: 2px; align-content: start; background: #000; border-left: 1px solid #2f7565; }
.g-tools button { padding: 2px; background: #9bdbdb; border: 2px solid; border-color: #d6f6f6 #4d8585 #4d8585 #d6f6f6; }
.g-tools svg { width: 30px; height: 30px; border: 1px solid #000; }
.g-tools svg > * { transform: translate(-3px, -3px); }
.g-tools text { font-family: "Liberation Sans", sans-serif; }
.g-cmd { height: 36px; display: flex; align-items: center; background: #ffffce; border: solid #000; border-width: 1px 0 2px; }
.g-cmd button { width: 32px; height: 33px; padding: 3px; flex: none; display: flex; justify-content: center; align-items: center; border: 1px solid #000; box-shadow: inset 0 0 0 2px #ffffce, inset 0 0 0 4px #d4d0a8; }
.g-cmd button.on { width: 30px; border: 3px solid #54b8a0; box-shadow: inset 0 0 0 2px #d4d0a8; }
.g-cmd label { width: 48px; text-align: center; font: bold 14px "Liberation Serif", serif; }
.g-cmd input { width: 174px; height: 32px; background: #ffffce; border: 3px solid; border-color: #8f8f74 #d4d0a8 #d4d0a8 #8f8f74; outline: 1px solid #000; outline-offset: -1px; }
.msg { padding-left: 4px; white-space: nowrap; border-left: 1px solid #000; }
.g-status { height: 30px; padding: 2px 0 1px; background: #7a9a9a; }
.g-status span { display: block; height: 27px; padding-left: 625px; background: #b0ffff; border: 1px solid #000; box-shadow: inset 1px 2px 0 #e0ffff, inset 0 -2px 0 #5a9a9a; line-height: 24px; }

/* ---- excel ---- */
.excel { position: absolute; left: 766px; right: -60px; top: 205px; bottom: 0; padding-left: 2px; display: flex; flex-direction: column; background: #bcd6fa; border-left: 1px solid #3c5a8c; border-top: 1px solid #3c5a8c; border-radius: 6px 0 0 0; overflow: hidden; color: #1e4587; }
.excel > * { flex: none; }
.x-title { height: 28px; display: flex; align-items: center; background: linear-gradient(#e3ebf8, #cadbf3 45%, #dbe8fa); border-bottom: 1px solid #a9c6ee; }
.qat { height: 22px; width: 103px; margin-left: 41px; padding-left: 12px; display: flex; align-items: center; gap: 5px; border: 1px solid #98b4dc; border-radius: 0 11px 11px 0; background: #d3e3f8; }
.caret.bar { margin-left: 8px; border-top-color: #15356e; box-shadow: 0 -5px 0 -2px #15356e; }
.x-caption { flex: 1; padding-right: 102px; margin-left: -60px; text-align: center; font: 13px Roboto, "Noto Sans CJK SC", sans-serif; color: #6b7480; }
.x-caption b { color: #3c6cb4; font-weight: normal; }
.orb { position: absolute; left: 6px; top: 7px; width: 36px; height: 36px; border-radius: 50%; display: flex; align-items: center; justify-content: center; background: radial-gradient(#fff 30%, #dfe2ea 60%, #b4bccb); border: 1px solid #7b8aa8; }
.x-tabs { height: 27px; padding: 2px 0 0 46px; display: flex; gap: 1px; background: #bfdbff; }
.x-tabs button { padding: 0 14px; height: 25px; line-height: 24px; }
.x-tabs .active { background: linear-gradient(#f4f8fd, #dce8f6); box-shadow: 0 0 0 1px #8db2e3; border-radius: 3px 3px 0 0; }
.x-tabs .q { margin: 4px 75px 0 auto; }
.ribbon { height: 106px; padding: 3px 0 4px 4px; display: flex; gap: 3px; background: linear-gradient(#dbe7f5, #c9ddf3 20%, #d3e6f8); border-top: 1px solid #8db2e3; border-bottom: 2px solid #a8dce8; }
.rg { height: 99px; display: flex; flex-direction: column; background: linear-gradient(#dfe9f6, #cbdcf0 25%, #d6e4f5); border: 1px solid #a3bfe2; border-radius: 3px; overflow: hidden; flex: none; white-space: nowrap; }
.rg h3 { margin: 0; height: 19px; display: flex; align-items: center; justify-content: center; position: relative; background: #c1d8f0; color: #3f68a8; font-size: 12px; font-weight: normal; }
.more { position: absolute; right: 6px; top: 5px; width: 7px; height: 7px; border: 1px solid #7c9ac4; border-right-color: #fff; }
.rg-body { flex: 1; min-height: 0; display: flex; }
.rg-body.col { flex-direction: column; padding: 3px; gap: 4px; }
.row { display: flex; align-items: center; gap: 4px; }
.clip { width: 72px; } .font { width: 234px; } .align { width: 112px; } .num { width: 88px; } .styles { width: 116px; } .cells { width: 68px; } .edit { width: 180px; }
.big { display: flex; flex-direction: column; align-items: center; gap: 4px; line-height: 17px; padding: 3px 0 0; }
.clip .big { width: 48px; }
.smalls { display: flex; flex-direction: column; gap: 6px; padding-top: 4px; }
.rg select { height: 25px; appearance: none; padding: 0 2px; font: 12px "Noto Sans", "Noto Sans CJK SC", sans-serif; color: #000; border: 1px solid #abc1de; background: linear-gradient(45deg, transparent 50%, #5a7bb0 50%) right 8px center/3px 3px no-repeat, linear-gradient(315deg, transparent 50%, #5a7bb0 50%) right 5px center/3px 3px no-repeat, #eaf2fb; }
.sel-font { width: 131px; }
.sel-size { width: 47px; margin-left: -5px; }
.font .rg-body { padding-top: 10px; gap: 11px; }
.font .row { gap: 3px; }
.bg { display: flex; height: 21px; border: 1px solid #8eabd5; border-radius: 2px; background: linear-gradient(#d9e6f6, #c4d8f0); }
.bg button { min-width: 22px; display: flex; align-items: center; justify-content: center; gap: 4px; }
.bg button + button { border-left: 1px solid #b4cae8; }
.bg .thin { min-width: 11px; }
.bg .hot { background: linear-gradient(#fbd79c, #f9a83e 50%, #fde28c); }
.ser { font: bold 14px "Liberation Serif", serif; color: #111; }
.ser.lg { font-size: 17px; }
.ser.it { font-style: italic; }
.ser.un { text-decoration: underline; }
.bg .ser:has(.tri) { gap: 0; }
.tri { align-self: flex-start; margin-top: 4px; border: 2px solid transparent; border-top: 0; border-bottom: 3px solid #2a5fc4; }
.tri.down { border-bottom: 0; border-top: 3px solid #2a5fc4; }
.font .bg button:has(.caret) { padding: 0 3px; }
.font .bg .thin:has(.caret) { padding: 0 2px; }
.fc span { color: #3a5f9a; border-bottom: 4px solid #e01010; width: 16px; height: 17px; line-height: 13px; text-align: center; }
.wen { display: flex; flex-direction: column; align-items: center; font-size: 11px; line-height: 11px; color: #2f51a0; height: 19px; }
.wen small { font-size: 8px; line-height: 7px; color: #222; font-weight: bold; }
.font .bg:has(.wen) button { gap: 3px; }
.align .row { gap: 6px; }
.align .rg-body .bg button:has(.caret) { padding: 0 3px; }
.align .row:last-child { gap: 4px; }
.num .rg-body { padding-top: 2px; gap: 3px; }
.num select { width: 80px; }
.fill { width: 80px; color: #111; }
.fill button { flex: 1; font-size: 12px; }
.fill button:first-child { flex: 2; }
.dec { font: bold 9px/9px "Liberation Sans", sans-serif; color: #222; text-align: right; }
.dec i { color: #2a5fc4; }
.rg-body.list { flex-direction: column; gap: 6px; padding: 4px 6px 0; }
.list button { height: 16px; display: flex; align-items: center; gap: 3px; line-height: 16px; }
.list .caret { margin-left: 3px; }
.edit .rg-body.list { flex: none; width: 34px; }
.edit .rg-body.list svg { width: 14px; }
.edit .big { width: 41px; gap: 1px; }
.edit .big .caret { margin-left: 4px; }
.sum { width: 14px; color: #111; font-size: 13px; text-align: center; }
.formula { height: 27px; padding: 4px 0; display: flex; border-bottom: 1px solid #6f93c4; background: linear-gradient(#a9c8ee 3px, transparent 3px 24px, #d5e6fa 24px), #fff; font-family: "Liberation Mono", "Noto Sans CJK SC", monospace; font-size: 13px; color: #000; }
.namebox { width: 158px; padding: 0 4px 0 62px; display: flex; align-items: center; justify-content: space-between; }
.namebox .caret { border-width: 4px; border-bottom-width: 0; border-top-color: #000; }
.fx { width: 76px; padding: 0 6px 0 4px; display: flex; align-items: center; justify-content: space-between; border: 1px solid #8db2e3; border-radius: 10px 0 0 10px; background: linear-gradient(#eaf2fc, #a9c6ec); font: italic bold 15px "Liberation Serif", serif; color: #444; }
.fx i { width: 9px; height: 9px; border-radius: 50%; background: #b9c8dc; }
.fx small { font-size: 12px; }
.formula input { flex: 1; padding: 0 12px; border: none; font: inherit; background: #fff; outline: none; }

.sheet { width: 860px; table-layout: fixed; border-collapse: collapse; background: #fff; color: #000; }
.c0 { width: 34px; } .ca { width: 58px; } .cb { width: 37px; } .cc { width: 89px; } .cd { width: 60px; } .ce { width: 81px; } .cf { width: 55px; } .cg { width: 49px; } .ch { width: 88px; } .ci { width: 139px; } .cj { width: 88px; } .ck { width: 82px; }
.sheet tr { height: 40px; }
.sheet thead tr { height: 19px; }
.sheet .r44 { height: 45px; } .sheet .r56 { height: 56px; } .sheet .r37 { height: 37px; }
.sheet th, .sheet td { padding: 0; border: 1px solid #000; }
.sheet th { font: 14px/16px "Liberation Mono", monospace; color: #333; background: #e4ecf7; border-color: #9eb6ce; vertical-align: bottom; }
.sheet thead th { background: linear-gradient(#f6fafd, #d8e0ec); vertical-align: middle; }
.sheet th.corner { background: linear-gradient(135deg, #a9c4e9 60%, #e6eefa 60%); }
.sheet th.cur { background: #fbcf83; border-color: #e8a55a; }
.sheet thead th.cur { background: linear-gradient(#f9d99f, #f0b45c); }
.sheet td { font: bold 14px/16px "Liberation Serif", "Noto Sans CJK SC", serif; }
.sheet .name { text-align: center; font-size: 17px; line-height: 19px; }
.sheet .n { text-align: center; font-size: 17px; }
.sheet .t { padding-left: 2px; white-space: nowrap; }
.sheet .y { background: #ff0; }
.sheet .lk, .sheet .k { padding-left: 1px; font: 13px/19px "Liberation Mono", "Noto Sans CJK SC", monospace; vertical-align: top; white-space: nowrap; }
.sheet .k { border-color: #d0d7e5; border-left-color: #000; vertical-align: middle; }
.sheet .k.active { border: 3px solid #000; }
.sheet a { color: #800080; text-decoration: underline; display: block; }
.sheet .lk a { max-height: 55px; overflow: hidden; }

/* ---- notes ---- */
.note { position: absolute; left: 302px; top: 696px; width: 419px; height: 71px; padding: 2px 4px 0 0; background: #fff; border: 3px solid #0000cc; color: #e0107c; font: bold 17px/22px "Noto Sans CJK SC", sans-serif; text-align: center; }
.marks { position: absolute; inset: 0; width: 100%; height: 100%; pointer-events: none; }
.booster { position: absolute; right: -6px; top: 54px; }
.booster .tip { position: absolute; left: 6px; top: 8px; font: bold 9px/13px "Noto Sans CJK SC", sans-serif; color: #d01818; }
.booster b { position: absolute; left: 91px; top: 14px; font-size: 12px; line-height: 16px; color: #fff; }

/* ---- taskbar ---- */
.taskbar { height: 75px; flex: none; display: flex; background: #d4d0c8; border-top: 1px solid #fff; padding: 2px 3px 2px 2px; font: 12px "DejaVu Sans Condensed", "Noto Sans CJK SC", sans-serif; }
.start-col { width: 105px; margin: 2px 9px 3px 0; border-right: 2px groove #fff; display: flex; flex-direction: column; }
.task { flex: 1; min-width: 0; height: 22px; padding: 0 4px; display: flex; align-items: center; gap: 4px; white-space: nowrap; overflow: hidden; border: 1px solid; border-color: #fff #404040 #404040 #fff; box-shadow: inset -1px -1px 0 #808080; background: #d4d0c8; font-size: 11px; }
.task.start { flex: none; width: 48px; margin-top: -2px; padding: 0 2px; gap: 1px; font-size: 12px; }
.clover { margin: 4px 0 0 65px; }
.task.navy { background: #0a246a; color: #fff; }
.task.pressed { background: #fff; font-weight: bold; border-color: #404040 #fff #fff #404040; box-shadow: none; }
.task-rows { flex: 1; display: flex; flex-direction: column; gap: 2px; }
.task-row { display: flex; align-items: center; gap: 2px; }
.task-row:last-child { margin-right: 144px; }
.task-row.first > svg { margin: 0 8px 0 7px; }
.task-row.first > svg:first-child { margin-right: 10px; }
.lang { width: 28px; margin: 2px 2px 3px 10px; padding: 3px 0; border-left: 2px groove #fff; display: flex; flex-direction: column; align-items: center; gap: 6px; }
.tray { width: 169px; padding: 2px; display: flex; align-items: center; border: 1px solid; border-color: #808080 #fff #fff #808080; }
.chev { margin: 0 8px 46px 4px; }
.tray-icons { width: 70px; display: grid; grid-template-columns: repeat(3, 16px); gap: 6px 7px; }
.clock { flex: 1; text-align: center; display: flex; flex-direction: column; font-size: 11px; line-height: 19px; }
```
